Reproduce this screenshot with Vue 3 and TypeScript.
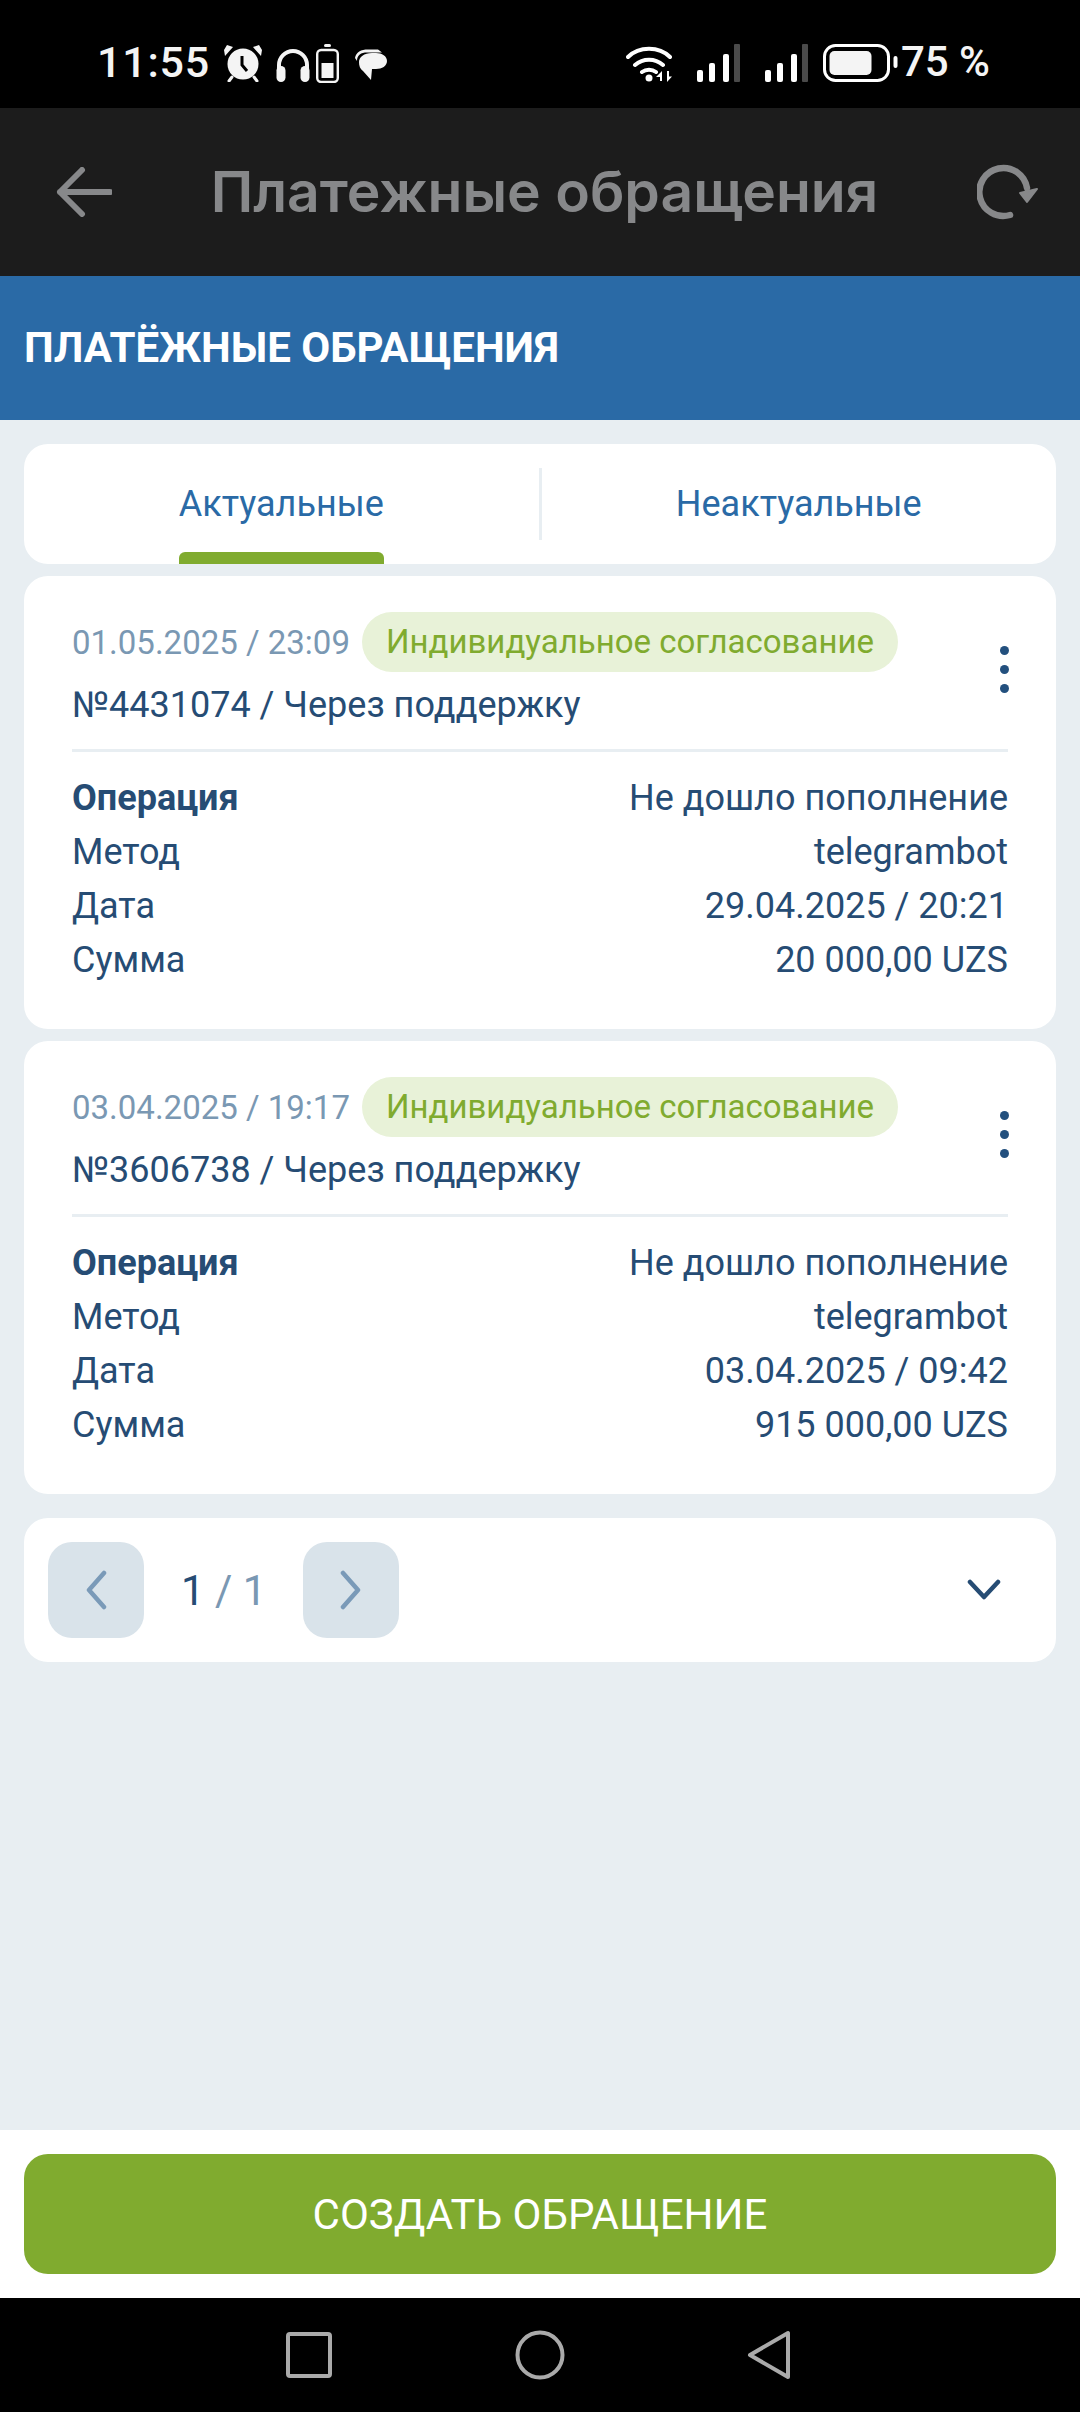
<script setup lang="ts">
interface Ticket {
  created: string
  id: string
  date: string
  amount: string
}
const tickets: Ticket[] = [
  { created: '01.05.2025 / 23:09', id: '№4431074 / Через поддержку', date: '29.04.2025 / 20:21', amount: '20 000,00 UZS' },
  { created: '03.04.2025 / 19:17', id: '№3606738 / Через поддержку', date: '03.04.2025 / 09:42', amount: '915 000,00 UZS' }
]
</script>

<template>
  <div class="screen">
    <div class="status">
      <div class="status-left">
        <span class="time">11:55</span>
        <svg class="i-alarm" width="38" height="38" viewBox="0 0 38 38">
          <circle cx="19" cy="20" r="15.500" fill="#f4f4f4" />
          <path d="M9 3 3 1 0 6l1 6ZM29 3l6-2 3 5-1 6Z" fill="#f4f4f4" />
          <path d="M18 12v9l5 6" fill="none" stroke="#000" stroke-width="3" />
          <path d="M8 33l-3 4M30 33l3 4" stroke="#f4f4f4" stroke-width="3" stroke-linecap="round" />
        </svg>
        <svg class="i-head" width="36" height="35" viewBox="0 0 36 35">
          <path d="M4 22V18a14 14 0 0 1 28 0v4" fill="none" stroke="#f4f4f4" stroke-width="4" />
          <rect x="1.500" y="19" width="9" height="16" rx="4.500" fill="#f4f4f4" />
          <rect x="25.500" y="19" width="9" height="16" rx="4.500" fill="#f4f4f4" />
        </svg>
        <svg class="i-batt" width="23" height="39" viewBox="0 0 23 39">
          <rect x="8" y="0" width="7" height="3" rx="1.500" fill="#f4f4f4" />
          <rect x="1.200" y="6" width="20.600" height="32" rx="4" fill="none" stroke="#f4f4f4" stroke-width="2.400" />
          <rect x="5.500" y="19" width="12" height="15" fill="#f4f4f4" />
        </svg>
        <svg class="i-chat" width="33" height="32" viewBox="0 0 33 32">
          <path d="M1 9C2 3 7 .500 14 .500h10l4 3H13C7 3.500 3 6 3 12Z" fill="#f4f4f4" />
          <path d="M5 13c0-5 5-9 13-9h4c6 0 11 3 11 8s-5 8-11 8h-4l-1 11-8-9c-3-2-4-5-4-9Z" fill="#f4f4f4" />
        </svg>
      </div>
      <div class="status-right">
        <svg class="i-wifi" width="48" height="38" viewBox="0 0 48 38">
          <path d="M2 13C13 2 33 2 44 13M9 21c8-7 20-7 28 0M16 28c4-3 10-3 14 0" fill="none" stroke="#fff" stroke-width="4" stroke-linecap="round" />
          <circle cx="23" cy="34" r="3.500" fill="#fff" />
          <path d="M36 27v10h-2v-4h-4ZM41 27v11l5-5.500h-3V27Z" fill="#fff" />
        </svg>
        <svg class="i-signal" width="44" height="38" viewBox="0 0 44 38">
          <rect x="0" y="26" width="6" height="12" rx="2" fill="#fff" />
          <rect x="12" y="19" width="6" height="19" rx="2" fill="#fff" />
          <rect x="26" y="10" width="6" height="28" rx="2" fill="#fff" />
          <rect x="37" y="0" width="6" height="38" rx="1" fill="#4a4a4a" />
        </svg>
        <svg class="i-signal2" width="44" height="38" viewBox="0 0 44 38">
          <rect x="0" y="26" width="6" height="12" rx="2" fill="#fff" />
          <rect x="12" y="19" width="6" height="19" rx="2" fill="#fff" />
          <rect x="26" y="10" width="6" height="28" rx="2" fill="#fff" />
          <rect x="37" y="0" width="6" height="38" rx="1" fill="#4a4a4a" />
        </svg>
        <svg class="i-battery" width="75" height="38" viewBox="0 0 75 38">
          <rect x="1.500" y="1.500" width="64" height="35" rx="11" fill="none" stroke="#fff" stroke-width="3" />
          <rect x="6.500" y="7" width="42" height="24" rx="5" fill="#f4f4f4" />
          <rect x="70.500" y="12" width="4" height="12" rx="2" fill="#fff" />
        </svg>
        <span class="pct">75 %</span>
      </div>
    </div>

    <header class="appbar">
      <svg class="back" width="56" height="50" viewBox="0 0 56 50">
        <path d="M54 25H4M26 3 4 25l22 22" fill="none" stroke="#87888a" stroke-width="6" stroke-linecap="round" stroke-linejoin="round" />
      </svg>
      <h1 class="bar-title">Платежные обращения</h1>
      <svg class="refresh" width="62" height="56" viewBox="0 0 62 56">
        <path d="M33 51A24 24 0 1 1 50 24" fill="none" stroke="#87888a" stroke-width="6.500" stroke-linecap="round" />
        <path d="M43 29 60 25 50 38Z" fill="#87888a" stroke="#87888a" stroke-width="2" stroke-linejoin="round" />
      </svg>
    </header>

    <div class="banner">ПЛАТЁЖНЫЕ ОБРАЩЕНИЯ</div>

    <main class="content">
      <nav class="tabs">
        <div class="tab active"><span class="tab-label">Актуальные</span></div>
        <div class="tab-sep"></div>
        <div class="tab"><span class="tab-label">Неактуальные</span></div>
      </nav>

      <article v-for="t in tickets" :key="t.id" class="card">
        <div class="card-head">
          <div class="head-text">
            <div class="head-line">
              <span class="created">{{ t.created }}</span>
              <span class="chip">Индивидуальное согласование</span>
            </div>
            <div class="ticket-id">{{ t.id }}</div>
          </div>
          <div class="dots"><i></i><i></i><i></i></div>
        </div>
        <dl class="rows">
          <div class="row"><dt class="strong">Операция</dt><dd>Не дошло пополнение</dd></div>
          <div class="row"><dt>Метод</dt><dd>telegrambot</dd></div>
          <div class="row"><dt>Дата</dt><dd>{{ t.date }}</dd></div>
          <div class="row"><dt>Сумма</dt><dd>{{ t.amount }}</dd></div>
        </dl>
      </article>

      <div class="pager">
        <button class="page-btn">
          <svg width="24" height="40" viewBox="0 0 24 40"><path d="M20 3 5 20l15 17" fill="none" stroke="#7a9ab8" stroke-width="4.500" stroke-linecap="round" stroke-linejoin="round" /></svg>
        </button>
        <div class="page-num"><span class="cur">1</span><span class="tot"> / 1</span></div>
        <button class="page-btn">
          <svg width="24" height="40" viewBox="0 0 24 40"><path d="M4 3l15 17L4 37" fill="none" stroke="#7a9ab8" stroke-width="4.500" stroke-linecap="round" stroke-linejoin="round" /></svg>
        </button>
        <svg class="caret" width="34" height="22" viewBox="0 0 34 22"><path d="M3 3l14 15L31 3" fill="none" stroke="#264c74" stroke-width="4.500" stroke-linecap="round" stroke-linejoin="round" /></svg>
      </div>
    </main>

    <footer class="actions">
      <button class="create">СОЗДАТЬ ОБРАЩЕНИЕ</button>
    </footer>

    <div class="navbar">
      <svg class="nav-square" width="46" height="46" viewBox="0 0 46 46"><rect x="2" y="2" width="42" height="42" rx="2" fill="none" stroke="#aaa" stroke-width="4" /></svg>
      <svg width="50" height="50" viewBox="0 0 50 50"><circle cx="25" cy="25" r="22.500" fill="none" stroke="#aaa" stroke-width="4" /></svg>
      <svg width="44" height="50" viewBox="0 0 44 50"><path d="M41 3v44L3 25Z" fill="none" stroke="#aaa" stroke-width="4" stroke-linejoin="round" /></svg>
    </div>
  </div>
</template>

<style>
html, body { margin: 0; background: #e8eef2; }
</style>

<style scoped>
.screen {
  width: 1080px;
  height: 2412px;
  display: flex;
  flex-direction: column;
  background: #e8eef2;
  font-family: Roboto, "Liberation Sans", sans-serif;
  overflow: hidden;
}
.status {
  height: 108px;
  flex: none;
  background: #000;
  color: #f4f4f4;
  display: flex;
  justify-content: space-between;
  align-items: flex-start;
  padding: 0 90px 0 97px;
  box-sizing: border-box;
}
.status-left, .status-right { display: flex; align-items: flex-start; }
.time { font-size: 43px; font-weight: 500; line-height: 50px; margin-top: 37px; letter-spacing: 0.8px; }
.i-alarm { margin: 44px 0 0 14px; }
.i-head { margin: 47px 0 0 13px; }
.i-batt { margin: 44px 0 0 5px; }
.i-chat { margin: 49px 0 0 15px; }
.i-wifi { margin-top: 44px; }
.i-signal { margin: 44px 0 0 23px; }
.i-signal2 { margin: 44px 0 0 24px; }
.i-battery { margin: 44px 0 0 14px; }
.pct { font-size: 42px; font-weight: 500; line-height: 50px; margin: 37px 0 0 3px; }

.appbar {
  height: 168px;
  flex: none;
  background: #1c1c1c;
  display: flex;
  align-items: center;
  padding: 0 41px 0 56px;
  box-sizing: border-box;
}
.back { flex: none; }
.bar-title {
  flex: 1;
  margin: 0;
  text-align: center;
  color: #87888a;
  font-family: Inter, Roboto, sans-serif;
  font-size: 57px;
  font-weight: 600;
  line-height: 66px;
  white-space: nowrap;
}
.refresh { flex: none; }

.banner {
  height: 144px;
  flex: none;
  box-sizing: border-box;
  background: #2a6aa6;
  color: #fff;
  font-size: 42px;
  font-weight: 700;
  display: flex;
  align-items: center;
  padding: 0 0 2px 24px;
}

.content {
  flex: 1;
  display: flex;
  flex-direction: column;
  padding: 24px 24px 0;
}
.tabs {
  height: 120px;
  background: #fff;
  border-radius: 24px;
  display: flex;
  align-items: center;
  overflow: hidden;
}
.tab {
  flex: 1;
  height: 100%;
  display: flex;
  justify-content: center;
}
.tab-label {
  position: relative;
  height: 100%;
  display: flex;
  align-items: center;
  color: #2a6aa6;
  font-size: 36px;
  line-height: 120px;
}
.active .tab-label::after {
  content: "";
  position: absolute;
  left: 0;
  right: 0;
  bottom: 0;
  height: 12px;
  background: #80ab2f;
  border-radius: 6px 6px 0 0;
}
.tab-sep { width: 3px; height: 72px; background: #e8eef2; flex: none; }

.card {
  margin-top: 12px;
  height: 453px;
  box-sizing: border-box;
  background: #fff;
  border-radius: 24px;
  padding: 35px 48px 0;
  color: #264c74;
}
.card-head {
  display: flex;
  justify-content: space-between;
  align-items: center;
  height: 141px;
  border-bottom: 3px solid #e8eef2;
  box-sizing: border-box;
  padding-bottom: 22px;
}
.head-line { display: flex; align-items: center; height: 60px; }
.created { color: #7a98b3; font-size: 33px; }
.chip {
  margin-left: 12px;
  height: 60px;
  padding: 0 24px;
  border-radius: 30px;
  background: #e8f2d8;
  color: #80ab2f;
  font-size: 33px;
  line-height: 60px;
  white-space: nowrap;
}
.ticket-id { font-size: 36px; line-height: 42px; margin-top: 12px; white-space: nowrap; }
.dots { display: flex; flex-direction: column; gap: 10px; margin-right: -1px; }
.dots i { display: block; width: 9px; height: 9px; border-radius: 50%; background: #23507e; }
.rows { margin: 19px 0 0; }
.row { display: flex; justify-content: space-between; height: 54px; line-height: 54px; font-size: 36px; }
.row dt, .row dd { margin: 0; }
.strong { font-weight: 700; }

.pager {
  margin-top: 24px;
  height: 144px;
  background: #fff;
  border-radius: 24px;
  display: flex;
  align-items: center;
  padding: 0 24px;
  box-sizing: border-box;
}
.page-btn {
  width: 96px;
  height: 96px;
  border: 0;
  padding: 0;
  border-radius: 24px;
  background: #d9e3ea;
  display: flex;
  align-items: center;
  justify-content: center;
}
.page-num { width: 159px; padding-left: 37px; box-sizing: border-box; font-size: 42px; white-space: nowrap; }
.cur { color: #264c74; }
.tot { color: #7a98b3; }
.caret { margin-left: auto; margin-right: 31px; }

.actions {
  height: 168px;
  flex: none;
  box-sizing: border-box;
  background: #fff;
  padding: 24px;
}
.create {
  width: 100%;
  height: 120px;
  border: 0;
  border-radius: 24px;
  background: #80ab2f;
  color: #fff;
  font-family: Roboto, sans-serif;
  font-size: 42px;
}
.navbar {
  height: 114px;
  flex: none;
  background: #000;
  display: flex;
  align-items: center;
  justify-content: center;
  gap: 182px;
  padding-right: 3px;
}
.nav-square { margin-right: 1px; }
</style>
